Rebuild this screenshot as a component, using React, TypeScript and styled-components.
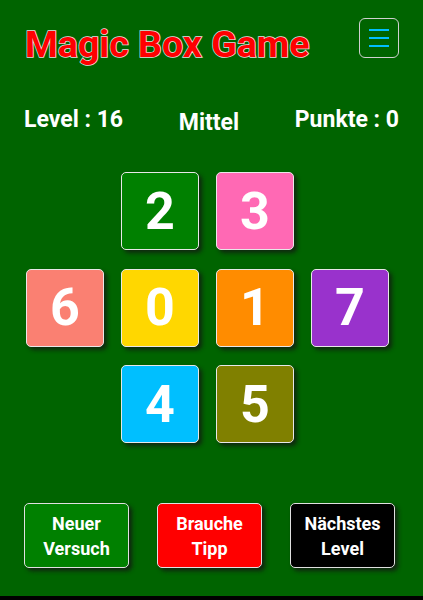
import React from "react";
import styled, { createGlobalStyle } from "styled-components";

const Global = createGlobalStyle`
  html, body { margin: 0; padding: 0; background: #000; }
  body { font-family: Roboto, "Liberation Sans", sans-serif; }
`;

const Page = styled.div`
  height: 596px;
  background: #006400;
  display: flex;
  flex-direction: column;
  box-sizing: border-box;
`;

const Header = styled.header`
  display: flex;
  justify-content: space-between;
  align-items: flex-start;
  padding: 18px 24px 0 25px;
`;

const Title = styled.h1`
  margin: 6px 0 0 0;
  font-size: 37.5px;
  line-height: 40px;
  font-weight: 700;
  color: #ff0000;
  -webkit-text-stroke: 1.5px #e0e0e0;
  paint-order: stroke fill;
`;

const MenuButton = styled.button`
  width: 40px;
  height: 40px;
  box-sizing: border-box;
  border: 1px solid #d0d0d0;
  border-radius: 6px;
  background: transparent;
  padding: 0;
  display: flex;
  flex-direction: column;
  align-items: center;
  justify-content: center;
  gap: 6px;
`;

const MenuLine = styled.span`
  display: block;
  width: 20px;
  height: 2px;
  background: #00bfff;
`;

const Stats = styled.div`
  margin-top: 43px;
  padding: 0 24px;
  display: flex;
  justify-content: space-between;
  align-items: flex-start;
  color: #fff;
  font-size: 23px;
  line-height: 25px;
  font-weight: 700;
`;

const StatItem = styled.span<{ $drop?: number }>`
  padding-top: ${(p) => p.$drop ?? 0}px;
`;

const Grid = styled.div`
  margin-top: 37px;
  padding-left: 26px;
  display: grid;
  grid-template-columns: repeat(4, 78px);
  grid-auto-rows: 78px;
  column-gap: 17px;
  row-gap: 18.5px;
`;

const Tile = styled.div<{ $bg: string; $col: number; $row: number }>`
  grid-column: ${(p) => p.$col};
  grid-row: ${(p) => p.$row};
  background: ${(p) => p.$bg};
  border: 1px solid #e8e8e8;
  border-radius: 5px;
  box-sizing: border-box;
  box-shadow: 3px 3px 4px rgba(20, 20, 20, 0.75);
  display: flex;
  align-items: center;
  justify-content: center;
  color: #fff;
  font-size: 52px;
  font-weight: 700;
`;

const Actions = styled.div`
  margin-top: 60px;
  padding-left: 24px;
  display: flex;
  gap: 28px;
`;

const ActionButton = styled.button<{ $bg: string }>`
  width: 105px;
  height: 65px;
  box-sizing: border-box;
  background: ${(p) => p.$bg};
  border: 1px solid #e0e0e0;
  border-radius: 5px;
  box-shadow: 3px 3px 4px rgba(20, 20, 20, 0.8);
  color: #fff;
  font-family: Roboto, "Liberation Sans", sans-serif;
  font-size: 18px;
  font-weight: 700;
  line-height: 25px;
  padding: 0;
  text-align: center;
`;

const tiles = [
  { n: 2, bg: "#008000", col: 2, row: 1 },
  { n: 3, bg: "#ff69b4", col: 3, row: 1 },
  { n: 6, bg: "#fa8072", col: 1, row: 2 },
  { n: 0, bg: "#ffd700", col: 2, row: 2 },
  { n: 1, bg: "#ff8c00", col: 3, row: 2 },
  { n: 7, bg: "#9932cc", col: 4, row: 2 },
  { n: 4, bg: "#00bfff", col: 2, row: 3 },
  { n: 5, bg: "#808000", col: 3, row: 3 },
];

export default function App() {
  return (
    <>
      <Global />
      <Page>
        <Header>
          <Title>Magic Box Game</Title>
          <MenuButton aria-label="Menü">
            <MenuLine />
            <MenuLine />
            <MenuLine />
          </MenuButton>
        </Header>
        <Stats>
          <StatItem>Level : 16</StatItem>
          <StatItem $drop={3}>Mittel</StatItem>
          <StatItem>Punkte : 0</StatItem>
        </Stats>
        <Grid>
          {tiles.map((t) => (
            <Tile key={t.n} $bg={t.bg} $col={t.col} $row={t.row}>
              {t.n}
            </Tile>
          ))}
        </Grid>
        <Actions>
          <ActionButton $bg="#008000">
            Neuer
            <br />
            Versuch
          </ActionButton>
          <ActionButton $bg="#ff0000">
            Brauche
            <br />
            Tipp
          </ActionButton>
          <ActionButton $bg="#000000">
            Nächstes
            <br />
            Level
          </ActionButton>
        </Actions>
      </Page>
    </>
  );
}
